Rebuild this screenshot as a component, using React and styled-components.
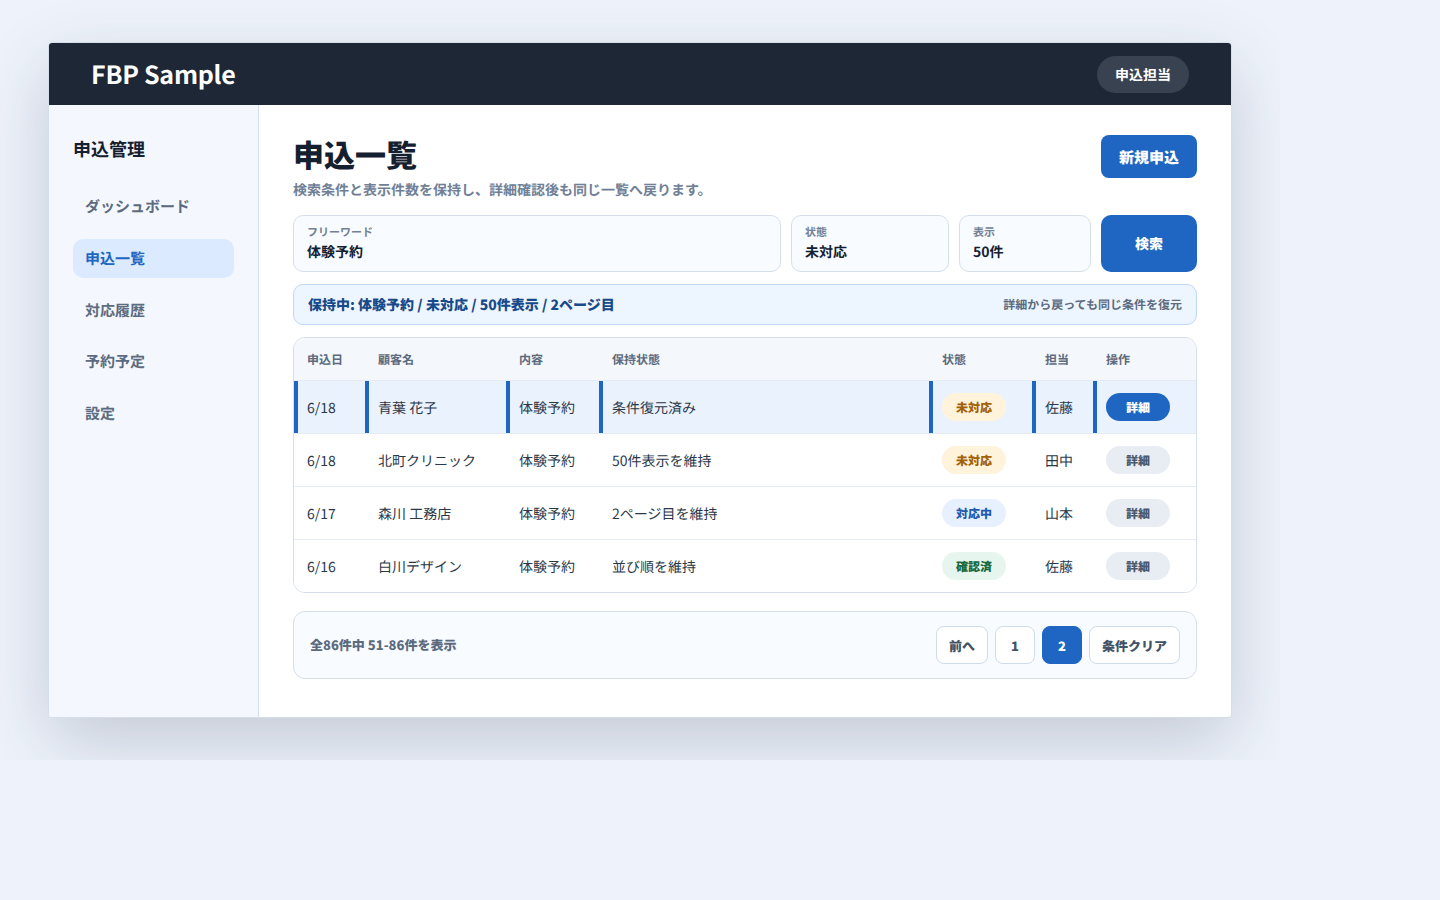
import styled, { createGlobalStyle } from "styled-components";

const GlobalStyle = createGlobalStyle`
  * {
    box-sizing: border-box;
  }
  body {
    margin: 0;
    background: #eef3fb;
    color: #14202f;
    font-family: "Noto Sans CJK JP", "Noto Sans", sans-serif;
    text-rendering: geometricPrecision;
  }
`;

const Stage = styled.div`
  width: 1280px;
  height: 760px;
  padding: 42px 48px;
  overflow: hidden;
`;

const Frame = styled.div`
  display: flex;
  flex-direction: column;
  height: 676px;
  background: #fff;
  border: 1px solid #d5dfea;
  border-radius: 4px;
  overflow: hidden;
  box-shadow: 0 24px 70px rgba(30, 41, 59, 0.2);
`;

const Header = styled.header`
  display: flex;
  align-items: center;
  justify-content: space-between;
  flex: none;
  height: 62px;
  padding: 0 42px;
  background: #1d2736;
  color: #fff;
`;

const Brand = styled.div`
  font-size: 25px;
  letter-spacing: -0.01em;
  font-weight: 700;
`;

const UserChip = styled.div`
  padding: 0 18px;
  height: 37px;
  line-height: 39px;
  border-radius: 19px;
  background: #394250;
  font-size: 14px;
  font-weight: 700;
`;

const Body = styled.div`
  display: flex;
  flex: 1;
  min-height: 0;
`;

const Sidebar = styled.aside`
  flex: none;
  width: 210px;
  padding: 30px 24px;
  background: #f4f8fe;
  border-right: 1px solid #d5dfea;
`;

const SideTitle = styled.h2`
  margin: 0 0 24px;
  font-size: 18px;
  line-height: 28px;
  font-weight: 700;
`;

const NavList = styled.nav`
  display: flex;
  flex-direction: column;
  gap: 13px;
`;

const NavItem = styled.a`
  display: block;
  width: 161px;
  height: 38.75px;
  padding: 0 12px;
  line-height: 40px;
  border-radius: 10px;
  font-size: 15px;
  font-weight: 700;
  color: ${(p) => (p.$active ? "#1e66c1" : "#5c6b7f")};
  background: ${(p) => (p.$active ? "#dbeafe" : "transparent")};
`;

const Main = styled.main`
  flex: 1;
  min-width: 0;
  padding: 30px 34px;
`;

const TitleRow = styled.div`
  display: flex;
  justify-content: space-between;
  align-items: flex-start;
  height: 68px;
`;

const Title = styled.h1`
  margin: 0;
  font-size: 31px;
  line-height: 37px;
  font-weight: 800;
`;

const Subtitle = styled.p`
  margin: 6px 0 0;
  font-size: 14px;
  line-height: 24px;
  font-weight: 700;
  color: #708096;
`;

const NewButton = styled.button`
  width: 96px;
  height: 43px;
  padding: 1px 0 0;
  border: 0;
  border-radius: 8px;
  background: #1e66c1;
  color: #fff;
  font-family: inherit;
  font-size: 15px;
  font-weight: 800;
  text-rendering: inherit;
`;

const SearchButton = styled.button`
  height: 57px;
  padding: 0;
  border: 0;
  border-radius: 10px;
  background: #1e66c1;
  color: #fff;
  font-family: inherit;
  font-size: 14px;
  font-weight: 800;
  text-rendering: inherit;
`;

const SearchRow = styled.div`
  display: grid;
  grid-template-columns: 1fr 158px 132px 96px;
  gap: 10px;
  height: 57px;
  margin-top: 12px;
`;

const Field = styled.div`
  padding: 9px 13px;
  border: 1px solid #d5dfea;
  border-radius: 10px;
  background: #f8fbff;
`;

const FieldLabel = styled.div`
  font-size: 11px;
  line-height: 14px;
  font-weight: 700;
  color: #708096;
`;

const FieldValue = styled.div`
  margin-top: 3px;
  font-size: 14px;
  line-height: 20px;
  font-weight: 700;
`;

const Notice = styled.div`
  display: flex;
  align-items: center;
  justify-content: space-between;
  height: 41px;
  margin-top: 12px;
  padding: 0 14px;
  border: 1px solid #bfd7f5;
  border-radius: 10px;
  background: #edf5fe;
`;

const NoticeMain = styled.span`
  font-size: 14px;
  font-weight: 800;
  color: #164a8a;
`;

const NoticeSide = styled.span`
  font-size: 12px;
  font-weight: 700;
  color: #5c6b7f;
`;

const TableWrap = styled.div`
  margin-top: 12px;
  border: 1px solid #d5dfea;
  border-radius: 12px;
  overflow: hidden;
`;

const Table = styled.table`
  width: 100%;
  border-collapse: collapse;
  table-layout: fixed;
`;

const Col = styled.col`
  width: ${(p) => p.$width};
`;

const Th = styled.th`
  height: 42px;
  padding: 2px 13px 0;
  text-align: left;
  font-size: 12px;
  font-weight: 700;
  color: #5c6b7f;
  background: #f4f7fb;
  border-bottom: 1px solid #e6ecf4;
`;

const Row = styled.tr`
  background: ${(p) => (p.$selected ? "#eaf2fe" : "#fff")};
`;

const Td = styled.td`
  height: 53px;
  padding: 2px 13px 0;
  font-size: 14px;
  color: #2b3849;
  border-bottom: 1px solid #e6ecf4;
  box-shadow: ${(p) => (p.$selected ? "inset 4px 0 0 #1e66c1" : "none")};

  tr:last-child & {
    border-bottom: 0;
  }
`;

const PillCell = styled(Td)`
  padding: 0 13px;
`;

const statusColors = {
  未対応: ["#fff3dc", "#a16207"],
  対応中: ["#e6f0fe", "#1e5bb0"],
  確認済: ["#e6f6ee", "#17693f"],
};

const Status = styled.span`
  display: block;
  width: 64px;
  height: 28px;
  line-height: 30px;
  border-radius: 14px;
  text-align: center;
  font-size: 12px;
  font-weight: 800;
  color: ${(p) => statusColors[p.$status][1]};
  background: ${(p) => statusColors[p.$status][0]};
`;

const DetailButton = styled.button`
  display: block;
  width: 64px;
  height: 28px;
  padding: 1px 0 0;
  border: 0;
  border-radius: 14px;
  font-family: inherit;
  font-size: 12px;
  font-weight: 800;
  text-rendering: inherit;
  color: ${(p) => (p.$selected ? "#fff" : "#4b5a6e")};
  background: ${(p) => (p.$selected ? "#1e66c1" : "#e8edf4")};
`;

const Pager = styled.div`
  display: flex;
  align-items: center;
  justify-content: space-between;
  height: 68px;
  margin-top: 18px;
  padding: 0 16px;
  border: 1px solid #d5dfea;
  border-radius: 12px;
  background: #f8fbff;
`;

const PagerText = styled.span`
  display: block;
  padding-bottom: 2px;
  font-size: 13px;
  font-weight: 800;
  color: #5c6b7f;
`;

const PagerButtons = styled.div`
  display: flex;
  gap: 7px;
`;

const PageButton = styled.button`
  height: 38px;
  padding: 0 12px;
  min-width: 40px;
  border: 1px solid ${(p) => (p.$active ? "#1e66c1" : "#cfdbe8")};
  border-radius: 8px;
  font-family: inherit;
  font-size: 13px;
  font-weight: 800;
  text-rendering: inherit;
  color: ${(p) => (p.$active ? "#fff" : "#445266")};
  background: ${(p) => (p.$active ? "#1e66c1" : "#fff")};
`;

const navItems = ["ダッシュボード", "申込一覧", "対応履歴", "予約予定", "設定"];

const columns = [
  ["申込日", "71px"],
  ["顧客名", "141px"],
  ["内容", "93px"],
  ["保持状態", "330px"],
  ["状態", "103px"],
  ["担当", "61px"],
  ["操作", "103px"],
];

const rows = [
  { date: "6/18", name: "青葉 花子", kind: "体験予約", keep: "条件復元済み", status: "未対応", owner: "佐藤", selected: true },
  { date: "6/18", name: "北町クリニック", kind: "体験予約", keep: "50件表示を維持", status: "未対応", owner: "田中" },
  { date: "6/17", name: "森川 工務店", kind: "体験予約", keep: "2ページ目を維持", status: "対応中", owner: "山本" },
  { date: "6/16", name: "白川デザイン", kind: "体験予約", keep: "並び順を維持", status: "確認済", owner: "佐藤" },
];

function App() {
  return (
    <>
      <GlobalStyle />
      <Stage>
        <Frame>
          <Header>
            <Brand>FBP Sample</Brand>
            <UserChip>申込担当</UserChip>
          </Header>
          <Body>
            <Sidebar>
              <SideTitle>申込管理</SideTitle>
              <NavList>
                {navItems.map((item) => (
                  <NavItem key={item} $active={item === "申込一覧"}>
                    {item}
                  </NavItem>
                ))}
              </NavList>
            </Sidebar>
            <Main>
              <TitleRow>
                <div>
                  <Title>申込一覧</Title>
                  <Subtitle>検索条件と表示件数を保持し、詳細確認後も同じ一覧へ戻ります。</Subtitle>
                </div>
                <NewButton>新規申込</NewButton>
              </TitleRow>
              <SearchRow>
                <Field>
                  <FieldLabel>フリーワード</FieldLabel>
                  <FieldValue>体験予約</FieldValue>
                </Field>
                <Field>
                  <FieldLabel>状態</FieldLabel>
                  <FieldValue>未対応</FieldValue>
                </Field>
                <Field>
                  <FieldLabel>表示</FieldLabel>
                  <FieldValue>50件</FieldValue>
                </Field>
                <SearchButton>検索</SearchButton>
              </SearchRow>
              <Notice>
                <NoticeMain>保持中: 体験予約 / 未対応 / 50件表示 / 2ページ目</NoticeMain>
                <NoticeSide>詳細から戻っても同じ条件を復元</NoticeSide>
              </Notice>
              <TableWrap>
                <Table>
                  <colgroup>
                    {columns.map(([label, width]) => (
                      <Col key={label} $width={width} />
                    ))}
                  </colgroup>
                  <thead>
                    <tr>
                      {columns.map(([label]) => (
                        <Th key={label}>{label}</Th>
                      ))}
                    </tr>
                  </thead>
                  <tbody>
                    {rows.map((row) => (
                      <Row key={row.name} $selected={row.selected}>
                        <Td $selected={row.selected}>{row.date}</Td>
                        <Td $selected={row.selected}>{row.name}</Td>
                        <Td $selected={row.selected}>{row.kind}</Td>
                        <Td $selected={row.selected}>{row.keep}</Td>
                        <PillCell $selected={row.selected}>
                          <Status $status={row.status}>{row.status}</Status>
                        </PillCell>
                        <Td $selected={row.selected}>{row.owner}</Td>
                        <PillCell $selected={row.selected}>
                          <DetailButton $selected={row.selected}>詳細</DetailButton>
                        </PillCell>
                      </Row>
                    ))}
                  </tbody>
                </Table>
              </TableWrap>
              <Pager>
                <PagerText>全86件中 51-86件を表示</PagerText>
                <PagerButtons>
                  <PageButton>前へ</PageButton>
                  <PageButton>1</PageButton>
                  <PageButton $active>2</PageButton>
                  <PageButton>条件クリア</PageButton>
                </PagerButtons>
              </Pager>
            </Main>
          </Body>
        </Frame>
      </Stage>
    </>
  );
}

export default App;
